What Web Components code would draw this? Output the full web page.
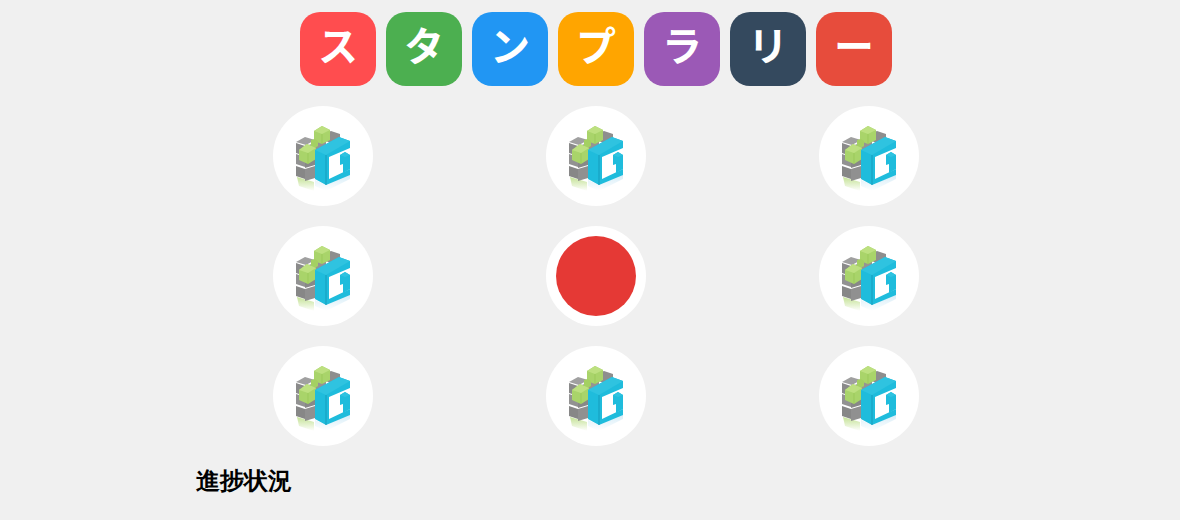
<!DOCTYPE html>
<html lang="ja">
<head>
<meta charset="utf-8">
<title>スタンプラリー</title>
<style>
  html, body { margin: 0; background: #f0f0f0; }
  body {
    box-sizing: border-box;
    width: 1180px;
    height: 520px;
    overflow: hidden;
    padding: 12px 0 0 12px;
    font-family: sans-serif;
  }
</style>
</head>
<body>
<stamp-rally>
  <rally-tile slot="title" color="#ff4d4f">ス</rally-tile>
  <rally-tile slot="title" color="#4caf50">タ</rally-tile>
  <rally-tile slot="title" color="#2196f3">ン</rally-tile>
  <rally-tile slot="title" color="#ffa500">プ</rally-tile>
  <rally-tile slot="title" color="#9b59b6">ラ</rally-tile>
  <rally-tile slot="title" color="#34495e">リ</rally-tile>
  <rally-tile slot="title" color="#e74c3c">ー</rally-tile>
  <rally-stamp></rally-stamp>
  <rally-stamp></rally-stamp>
  <rally-stamp></rally-stamp>
  <rally-stamp></rally-stamp>
  <rally-stamp done></rally-stamp>
  <rally-stamp></rally-stamp>
  <rally-stamp></rally-stamp>
  <rally-stamp></rally-stamp>
  <rally-stamp></rally-stamp>
  <span slot="progress">進捗状況</span>
</stamp-rally>
<script>
  class StampRally extends HTMLElement {
    connectedCallback() {
      if (this.shadowRoot) return;
      this.attachShadow({ mode: "open" });
      this.shadowRoot.innerHTML = `
      <style>
        :host { display: block; width: 1168px; }
        .title { display: flex; justify-content: center; gap: 10px; margin-bottom: 20px; }
        .board {
          width: 800px;
          margin: 0 auto;
          display: grid;
          grid-template-columns: repeat(3, 1fr);
          gap: 20px;
          justify-items: center;
        }
        h2 { width: 800px; margin: 19px auto 0; font-size: 24px; line-height: 32px; font-weight: 700; color: #000; }
      </style>
      <div class="title"><slot name="title"></slot></div>
      <div class="board"><slot></slot></div>
      <h2><slot name="progress"></slot></h2>
    `;
    }
  }

  class RallyTile extends HTMLElement {
    connectedCallback() {
      if (this.shadowRoot) return;
      this.attachShadow({ mode: "open" });
      this.shadowRoot.innerHTML = `
      <style>
        :host {
          display: block;
          width: 76px;
          height: 74px;
          border-radius: 20px;
          background: ${this.getAttribute("color")};
          color: #fff;
          font-family: "Noto Sans CJK JP", sans-serif;
          font-size: 40px;
          font-weight: 700;
          line-height: 64px;
          text-align: center;
        }
      </style>
      <slot></slot>
    `;
    }
  }

  class RallyStamp extends HTMLElement {
    connectedCallback() {
      if (this.shadowRoot) return;
      this.attachShadow({ mode: "open" });
      const mark = this.hasAttribute("done")
        ? `<div class="done"></div>`
        : `<svg width="100" height="100" viewBox="0 0 100 100">
            <defs>
              <linearGradient id="fade" x1="0" y1="0" x2="0" y2="1">
                <stop offset="0" stop-color="#c4e296"/><stop offset="1" stop-color="#fff"/>
              </linearGradient>
              <linearGradient id="glow" x1="0" y1="0" x2="0" y2="1">
                <stop offset="0" stop-color="#d5ecf7"/><stop offset="1" stop-color="#fff"/>
              </linearGradient>
            </defs>
            <g filter="blur(.35px)">
              <!-- floor reflection -->
              <path d="M24 71l17 5v9l-15-5z" fill="url(#fade)"/>
              <path d="M42 74l11 5 24-11v5L53 85l-11-5z" fill="url(#glow)"/>
              <!-- grey cubes -->
              <path d="M23 36l9-5 10 3-9 5z" fill="#a0a0a0"/>
              <path d="M23 37l9 3v10l-9-3z" fill="#8a8a8a"/>
              <path d="M32 40l10-3v10l-10 3z" fill="#939393"/>
              <path d="M23 48l9 3v10l-9-3z" fill="#929292"/>
              <path d="M32 51l10-3v11l-10 3z" fill="#888"/>
              <path d="M23 60l9 3v10l-9-3z" fill="#878787"/>
              <path d="M32 63l10-3v12l-10 3z" fill="#909090"/>
              <path d="M50 28l8-3 9 3v4l-9 5-8-3z" fill="#8e8e8e"/>
              <path d="M41 34l4-2 8 2v7l-12 5z" fill="#949494"/>
              <!-- green cubes -->
              <path d="M41 25l8-5 8 4v10l-8 4-8-3z" fill="#a9d46a"/>
              <path d="M41 25l8 3 8-4-8-4z" fill="#bde080"/>
              <path d="M49 28v10" stroke="#95c455" stroke-width=".7"/>
              <path d="M38 34l4-1 3 2v5l-3 2-4-2z" fill="#a4d062"/>
              <path d="M26 44l8-6 9 4v11l-8 5-9-4z" fill="#a9d46a"/>
              <path d="M26 44l9 3 8-5-9-4z" fill="#bde080"/>
              <path d="M35 47v11" stroke="#95c455" stroke-width=".7"/>
              <!-- blue letter -->
              <path d="M42 44l24-13 11 4v7L56 51v22l21-10v6L53 79l-11-6z" fill="#1fbcdc"/>
              <path d="M42 44l11 5 24-14-11-4z" fill="#2fc3e0"/>
              <path d="M53 49v30" stroke="#169cbc" stroke-width="1"/>
              <path d="M67 49l5-3 5 3v14l-7 4v-9l-3 1z" fill="#1fbcdc"/>
              <path d="M67 49l5 2 5-2-5-3z" fill="#2fc3e0"/>
            </g>
          </svg>`;
      this.shadowRoot.innerHTML = `
      <style>
        :host {
          display: flex;
          align-items: center;
          justify-content: center;
          width: 100px;
          height: 100px;
          border-radius: 50%;
          background: #fff;
        }
        svg { display: block; }
        .done { width: 80px; height: 80px; border-radius: 50%; background: #e53935; }
      </style>
      ${mark}
    `;
    }
  }

  customElements.define("stamp-rally", StampRally);
  customElements.define("rally-tile", RallyTile);
  customElements.define("rally-stamp", RallyStamp);
</script>
</body>
</html>
